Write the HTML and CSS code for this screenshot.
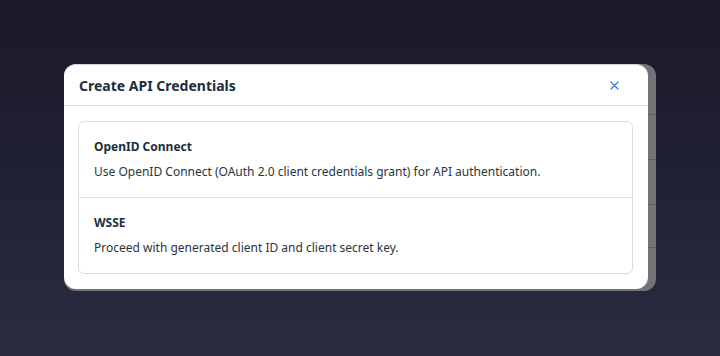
FILE: index.html
```html
<!DOCTYPE html>
<html lang="en">
<head>
<meta charset="utf-8">
<title>Create API Credentials</title>
<link rel="stylesheet" href="styles.css">
</head>
<body>
<div class="stage">
  <div class="backdrop-card">
    <div class="dialog">
      <div class="dialog-header">
        <h1 class="dialog-title">Create API Credentials</h1>
        <button class="close-btn" aria-label="Close">
          <svg width="9" height="9" viewBox="0 0 9 9"><path d="M1 1L8 8M8 1L1 8" stroke="#3b7ee8" stroke-width="1.4" stroke-linecap="round"/></svg>
        </button>
      </div>
      <div class="dialog-body">
        <ul class="option-list">
          <li class="option">
            <div class="option-title">OpenID Connect</div>
            <div class="option-desc">Use OpenID Connect (OAuth 2.0 client credentials grant) for API authentication.</div>
          </li>
          <li class="option">
            <div class="option-title">WSSE</div>
            <div class="option-desc">Proceed with generated client ID and client secret key.</div>
          </li>
        </ul>
      </div>
    </div>
  </div>
</div>
</body>
</html>
```
FILE: styles.css
```css
* { box-sizing: border-box; }
html, body { margin: 0; padding: 0; }
body {
  width: 720px;
  height: 356px;
  overflow: hidden;
  font-family: "Noto Sans", "Liberation Sans", sans-serif;
  background: linear-gradient(180deg, #1b1a2b 0%, #1f1f31 40%, #2a2c41 100%);
}
.stage {
  padding: 64px 0 0 64px;
}
.backdrop-card {
  width: 592px;
  padding: 0 8px 2px 0;
  border-radius: 12px;
  background:
    linear-gradient(180deg,
      transparent 50px, #5f6166 50px, #5f6166 51px,
      transparent 51px, transparent 95px, #5f6166 95px, #5f6166 96px,
      transparent 96px, transparent 140px, #5f6166 140px, #5f6166 141px,
      transparent 141px, transparent 183px, #5f6166 183px, #5f6166 184px,
      transparent 184px),
    #737477;
}
.dialog {
  background: #ffffff;
  border-radius: 12px;
  border-top: 1px solid #d0d3d8;
  padding-bottom: 15px;
}
.dialog-header {
  height: 41px;
  display: flex;
  align-items: center;
  justify-content: space-between;
  padding: 0 28px 0 15px;
  border-bottom: 1px solid #d9dde3;
}
.dialog-title {
  margin: 0;
  font-size: 14px;
  font-weight: 700;
  color: #1d2d3e;
}
.close-btn {
  border: 0;
  background: none;
  padding: 0;
  width: 12px;
  height: 12px;
  display: flex;
  align-items: center;
  justify-content: center;
}
.dialog-body {
  padding: 15px 15px 0 14px;
}
.option-list {
  list-style: none;
  margin: 0;
  padding: 0;
  border: 1px solid #d9dde3;
  border-radius: 6px;
}
.option {
  padding: 17px 15px 16px 15px;
}
.option + .option {
  border-top: 1px solid #d9dde3;
}
.option-title {
  font-size: 12px;
  font-weight: 700;
  line-height: 16px;
  color: #1d2d3e;
}
.option-desc {
  margin-top: 8px;
  font-size: 12px;
  line-height: 18px;
  color: #2c3440;
}
```
